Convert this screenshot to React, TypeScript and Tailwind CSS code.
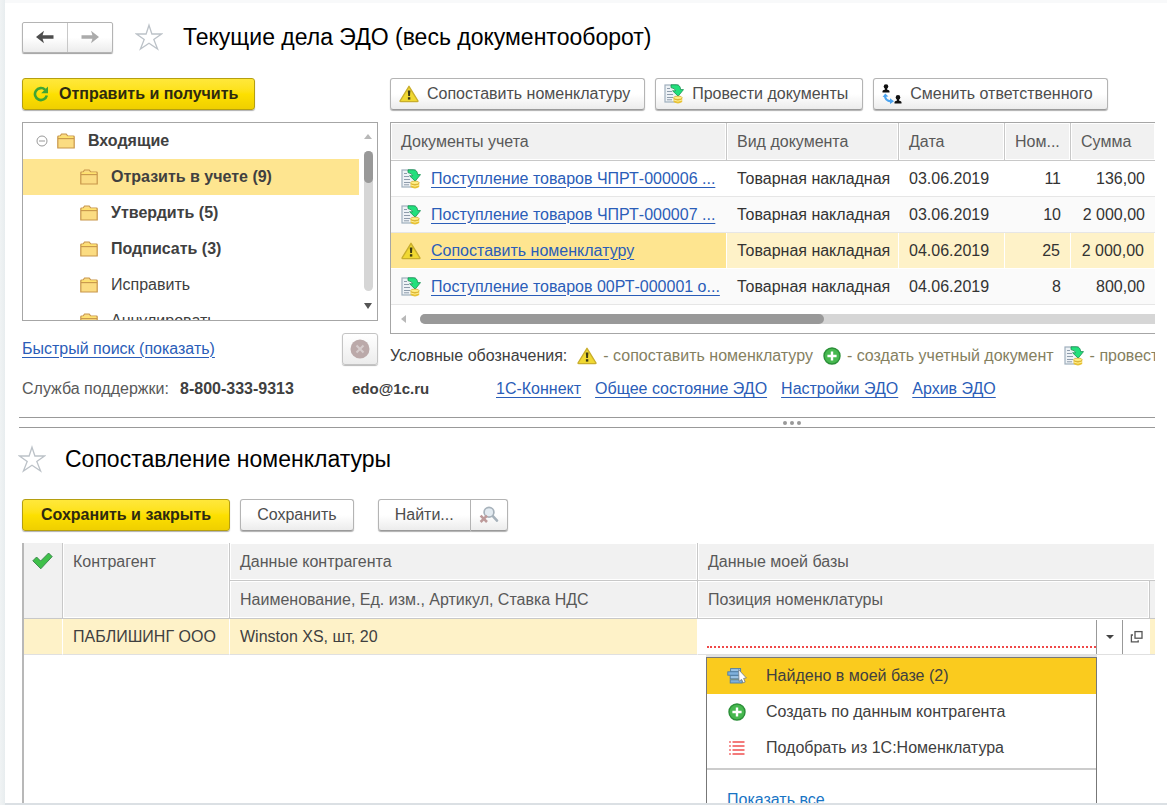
import { useState } from "react";

type IconProps = { className?: string };

const StarIcon = ({ className }: IconProps) => (
  <svg className={className} width="28" height="28" viewBox="0 0 28 28" fill="none">
    <path
      d="M14 2.2 L16.9 11 L26.5 11 L18.8 16.4 L22.6 26 L14 20.2 L5.4 26 L9.2 16.4 L1.5 11 L11.1 11 Z"
      stroke="#bcc2c8"
      strokeWidth="1.3"
    />
  </svg>
);

const ArrowIcon = ({ className }: IconProps) => (
  <svg className={className} width="18" height="14" viewBox="0 0 18 14" fill="currentColor">
    <path d="M0 7 L8 0.8 L6.6 5.2 H17.5 V8.8 H6.6 L8 13.2 Z" />
  </svg>
);

const RefreshIcon = () => (
  <svg width="16" height="16" viewBox="0 0 16 16" fill="none">
    <path d="M12.2 3.8 A6 6 0 1 0 13.8 9.5" stroke="#3fa535" strokeWidth="2.6" />
    <path d="M15 0.5 V7.2 H8.2 Z" fill="#3fa535" />
  </svg>
);

const WarningIcon = () => (
  <svg className="shrink-0" width="20" height="18" viewBox="0 0 20 18">
    <path
      d="M10 1.3 L19 16 Q19 16.6 18.2 16.6 H1.8 Q1 16.6 1 16 Z"
      fill="#f0d832"
      stroke="#c9ae2c"
      strokeWidth="1.4"
      strokeLinejoin="round"
    />
    <path d="M8.8 5.6 H11.4 L11 11 H9.2 Z" fill="#3d3a12" />
    <rect x="8.9" y="12.2" width="2.4" height="2.4" fill="#3d3a12" />
  </svg>
);

const PostIcon = () => (
  <svg className="shrink-0" width="20" height="20" viewBox="0 0 20 20">
    <rect x="1" y="1" width="13" height="17" fill="#eef2f6" stroke="#9fafbd" strokeWidth="1.2" />
    <path d="M3 4.5 H6 M3 7.5 H8 M3 10.5 H9 M3 13.5 H9 M3 15.8 H8" stroke="#8e9cab" />
    <path
      d="M7 0.8 H12.5 Q16.4 1 16.6 5.6 H19.5 L14.2 12.2 L8.6 6.8 H11.6 Q11.4 4.4 7 3.6 Z"
      fill="#22e07c"
      stroke="#1b8f50"
      strokeWidth="0.8"
    />
    <path d="M9.6 13.6 V18 Q14 20.8 18.2 18 V13.6 Z" fill="#e8c234" />
    <ellipse cx="13.9" cy="13.8" rx="4.3" ry="1.7" fill="#ffef86" stroke="#c99a1e" strokeWidth="0.6" />
    <path d="M9.8 16 Q14 18.4 18 16" stroke="#fff3a0" strokeWidth="0.9" fill="none" />
  </svg>
);

const PersonsIcon = () => (
  <svg className="shrink-0" width="20" height="20" viewBox="0 0 20 20">
    <circle cx="4" cy="2.6" r="2.3" fill="#111" />
    <path d="M0.5 8.6 V7 Q0.6 5.9 3 5.4 V4 H5 V5.4 Q7.4 5.9 7.5 7 V8.6 Z" fill="#111" />
    <circle cx="16" cy="13.4" r="2.3" fill="#111" />
    <path d="M12.5 19.6 V18 Q12.6 16.9 15 16.4 V15 H17 V16.4 Q19.4 16.9 19.5 18 V19.6 Z" fill="#111" />
    <path d="M3 11.5 Q3 17 9 17.3" stroke="#4aa3f0" strokeWidth="2.2" fill="none" />
    <path d="M0.6 13 L3.2 9.4 L6.4 12.6 Z M8 14.2 L12 17.3 L8 20 Z" fill="#4aa3f0" />
  </svg>
);

const FolderIcon = () => (
  <svg className="shrink-0" width="18" height="16" viewBox="0 0 18 16">
    <path
      d="M0.8 15 V3.8 Q0.8 3 1.6 3 H3 L4.6 1 H9.2 L10.8 3 H16.4 Q17.2 3 17.2 3.8 V15 Z"
      fill="#fbdc82"
      stroke="#c8964a"
      strokeWidth="1.2"
    />
    <path d="M1 5.6 H17" stroke="#c8964a" strokeWidth="1.1" />
    <path d="M2 4.2 H16" stroke="#ffe36b" strokeWidth="1.4" />
  </svg>
);

const PlusIcon = () => (
  <svg className="shrink-0" width="18" height="18" viewBox="0 0 18 18">
    <circle cx="9" cy="9" r="8" fill="#46b84f" stroke="#2b8f38" strokeWidth="1.4" />
    <path d="M9 4.4 V13.6 M4.4 9 H13.6" stroke="#fff" strokeWidth="2.4" />
  </svg>
);

const CheckIcon = () => (
  <svg width="21" height="18" viewBox="0 0 21 18">
    <path
      d="M0.8 8.8 L4.6 5 L8.6 9 L16.6 1 L20.2 4.6 L8.8 16.8 Z"
      fill="#3fc04a"
      stroke="#37804a"
      strokeWidth="0.9"
      strokeLinejoin="round"
    />
  </svg>
);

const SearchOffIcon = () => (
  <svg width="20" height="18" viewBox="0 0 20 18" fill="none">
    <path d="M13.4 9.6 L18 14.6" stroke="#a7b2bb" strokeWidth="2.6" strokeLinecap="round" />
    <circle cx="10" cy="6.2" r="4.9" fill="#e3ebf1" stroke="#a7b2bb" strokeWidth="1.7" />
    <path d="M1.6 9.6 L8 16 M8 9.6 L1.6 16" stroke="#bd9a9a" strokeWidth="2.6" />
  </svg>
);

const FoundIcon = () => (
  <svg width="20" height="18" viewBox="0 0 20 18">
    <rect x="3.6" y="1.6" width="10" height="3.2" fill="#9cc3e4" stroke="#4d7ca8" strokeWidth="0.9" />
    <rect x="0.8" y="4.8" width="12.8" height="3.4" fill="#7fb0dc" stroke="#4d7ca8" strokeWidth="0.9" />
    <rect x="3.2" y="8.6" width="10.4" height="3.2" fill="#9cc3e4" stroke="#4d7ca8" strokeWidth="0.9" />
    <rect x="3.2" y="12.8" width="12" height="3.2" fill="#7fb0dc" stroke="#4d7ca8" strokeWidth="0.9" />
    <path
      d="M11.6 2.6 L19.4 11 L16.6 11.4 L18.2 15 L16.2 15.8 L14.6 12.4 L12 14.4 Z"
      fill="#fff"
      stroke="#6c7a87"
      strokeWidth="0.8"
    />
  </svg>
);

const ListIcon = () => (
  <svg width="16" height="14" viewBox="0 0 16 14">
    <path d="M3.5 1 H15.5 M3.5 5 H15.5 M3.5 9 H15.5 M3.5 13 H15.5" stroke="#f05050" strokeWidth="1.5" />
    <path d="M0.2 1 H1.8 M0.2 5 H1.8 M0.2 9 H1.8 M0.2 13 H1.8" stroke="#f05050" strokeWidth="1.5" />
  </svg>
);

const OpenIcon = () => (
  <svg width="14" height="14" viewBox="0 0 14 14" fill="none" stroke="#555" strokeWidth="1.3">
    <rect x="5" y="1.6" width="7" height="6.6" />
    <path d="M3 5 H1.4 V11.8 H8.2 V10.2" />
  </svg>
);

const folders = [
  { name: "Отразить в учете (9)", bold: true },
  { name: "Утвердить (5)", bold: true },
  { name: "Подписать (3)", bold: true },
  { name: "Исправить", bold: false },
  { name: "Аннулировать", bold: false },
];

const documents = [
  { title: "Поступление товаров ЧПРТ-000006 ...", date: "03.06.2019", number: "11", sum: "136,00", ready: true },
  { title: "Поступление товаров ЧПРТ-000007 ...", date: "03.06.2019", number: "10", sum: "2 000,00", ready: true },
  { title: "Сопоставить номенклатуру", date: "04.06.2019", number: "25", sum: "2 000,00", ready: false },
  { title: "Поступление товаров 00РТ-000001 о...", date: "04.06.2019", number: "8", sum: "800,00", ready: true },
];

const supportLinks = ["1С-Коннект", "Общее состояние ЭДО", "Настройки ЭДО", "Архив ЭДО"];

const menuItems = [
  { name: "Найдено в моей базе (2)", icon: <FoundIcon /> },
  { name: "Создать по данным контрагента", icon: <PlusIcon /> },
  { name: "Подобрать из 1С:Номенклатура", icon: <ListIcon /> },
];

const grayButton =
  "flex h-8 items-center whitespace-nowrap rounded-[3px] border border-[#b4b4b4] border-b-[#9a9a9a] bg-linear-to-b from-white from-50% to-[#ececec] shadow-[0_1px_1px_#b0b0b0]";
const yellowButton =
  "flex h-8 items-center whitespace-nowrap rounded-[3px] border border-[#b59f10] bg-linear-to-b from-[#ffe83a] via-[#fde000] to-[#efcf00] font-bold text-[#2e2a10] shadow-[0_1px_1px_#b0b0b0]";
const link = "text-[#2a5db8] underline decoration-1 underline-offset-3";
const headCell = "border-r border-b border-[#c8c8c8] px-[10px] text-left font-normal text-[#595959] shadow-[inset_0_0_0_1px_#fff]";

const DocumentsPanel = () => {
  const [folder, setFolder] = useState(0);
  const [selected, setSelected] = useState(2);

  return (
    <section>
      <div className="flex items-center pt-[18px]">
        <div className="flex h-[31px] w-[91px] rounded-[2px] border border-[#b4b4b4] bg-linear-to-b from-white from-50% to-[#ececec] shadow-[0_1px_1px_#a0a0a0]">
          <button aria-label="Назад" className="flex flex-1 items-center justify-center border-r border-[#c8c8c8] text-[#4d4d4d]">
            <ArrowIcon />
          </button>
          <button aria-label="Вперед" className="flex flex-1 items-center justify-center text-[#ababab]">
            <ArrowIcon className="rotate-180" />
          </button>
        </div>
        <StarIcon className="ml-[22px]" />
        <h1 className="ml-5 text-[23px] leading-8 whitespace-nowrap text-black">
          Текущие дела ЭДО (весь документооборот)
        </h1>
      </div>

      <div className="mt-[25px] flex gap-3">
        <div className="w-[356px] shrink-0">
          <button className={`${yellowButton} gap-[10px] pr-4 pl-[10px]`}>
            <RefreshIcon />
            Отправить и получить
          </button>
          <div className="mt-3 flex h-[199px] border border-[#a6a6a6]">
            <ul className="flex-1 overflow-hidden text-[#404040]">
              <li className="flex h-9 items-center pl-[13px] font-bold">
                <svg width="12" height="12" viewBox="0 0 12 12" fill="none" stroke="#999">
                  <circle cx="6" cy="6" r="5" />
                  <path d="M3 6 H9" />
                </svg>
                <span className="ml-[9px] flex items-center gap-[13px]">
                  <FolderIcon />
                  Входящие
                </span>
              </li>
              {folders.map((item, i) => (
                <li key={item.name}>
                  <button
                    onClick={() => setFolder(i)}
                    className={`flex h-9 w-full items-center gap-[13px] pl-[57px] ${item.bold ? "font-bold" : ""} ${
                      folder === i ? "bg-[#fee590]" : ""
                    }`}
                  >
                    <FolderIcon />
                    {item.name}
                  </button>
                </li>
              ))}
            </ul>
            <div className="flex w-[18px] flex-col items-center py-[11px]">
              <span className="border-x-4 border-b-[5px] border-x-transparent border-b-[#b8b8b8]" />
              <div className="mt-3 mb-3 w-[9px] flex-1 rounded-full bg-[#d6d6d6]">
                <div className="h-8 rounded-full bg-[#999]" />
              </div>
              <span className="border-x-4 border-t-[6px] border-x-transparent border-t-[#555]" />
            </div>
          </div>
          <div className="mt-[11px] flex h-[33px] items-center justify-between">
            <a href="#" className={link}>
              Быстрый поиск (показать)
            </a>
            <button
              aria-label="Очистить поиск"
              className="flex h-8 w-9 items-center justify-center rounded-[3px] border border-[#c4c4c4] bg-linear-to-b from-white to-[#ececec] shadow-[0_1px_1px_#b8b8b8]"
            >
              <svg width="20" height="20" viewBox="0 0 20 20">
                <circle cx="10" cy="10" r="9.5" fill="#bba9a9" />
                <path d="M6.5 6.5 L13.5 13.5 M13.5 6.5 L6.5 13.5" stroke="#d6cccc" strokeWidth="2" />
              </svg>
            </button>
          </div>
        </div>

        <div className="min-w-0 flex-1">
          <div className="flex gap-[10px] text-[#4d4d4d]">
            <button className={`${grayButton} gap-2 pr-[14px] pl-2`}>
              <WarningIcon />
              Сопоставить номенклатуру
            </button>
            <button className={`${grayButton} gap-2 pr-[14px] pl-2`}>
              <PostIcon />
              Провести документы
            </button>
            <button className={`${grayButton} gap-2 pr-[14px] pl-2`}>
              <PersonsIcon />
              Сменить ответственного
            </button>
          </div>

          <div className="mt-3 border border-r-0 border-[#a6a6a6]">
            <table className="w-full table-fixed border-separate border-spacing-0 whitespace-nowrap">
              <colgroup>
                <col />
                <col className="w-[172px]" />
                <col className="w-[106px]" />
                <col className="w-[66px]" />
                <col className="w-[84px]" />
              </colgroup>
              <thead>
                <tr className="h-[38px] bg-[#f1f1f1]">
                  <th className={headCell}>Документы учета</th>
                  <th className={headCell}>Вид документа</th>
                  <th className={headCell}>Дата</th>
                  <th className={headCell}>Ном...</th>
                  <th className={`${headCell} border-r-0`}>Сумма</th>
                </tr>
              </thead>
              <tbody className="text-[#333]">
                {documents.map((doc, i) => {
                  const active = selected === i;
                  const cell = `border-b px-[10px] ${
                    active ? "border-r border-white bg-[#fef2c8]" : "border-[#e6e6e6]"
                  }`;
                  return (
                    <tr key={doc.title} onClick={() => setSelected(i)} className={`h-9 ${i % 2 ? "bg-[#fafafa]" : ""}`}>
                      <td className={`border-b pl-[10px] ${active ? "border-r border-white bg-[#fee590]" : "border-[#e6e6e6]"}`}>
                        <div className="flex items-center gap-[10px]">
                          {doc.ready ? <PostIcon /> : <WarningIcon />}
                          <a href="#" className={link}>
                            {doc.title}
                          </a>
                        </div>
                      </td>
                      <td className={cell}>Товарная накладная</td>
                      <td className={cell}>{doc.date}</td>
                      <td className={`${cell} text-right`}>{doc.number}</td>
                      <td className={`${cell} text-right`}>{doc.sum}</td>
                    </tr>
                  );
                })}
              </tbody>
            </table>
            <div className="flex h-7 items-center pl-[10px]">
              <span className="mr-[14px] border-y-4 border-r-[5px] border-y-transparent border-r-[#b8b8b8]" />
              <div className="h-[10px] flex-1 rounded-l-full bg-[#d6d6d6]">
                <div className="h-full w-[55%] rounded-full bg-[#999]" />
              </div>
            </div>
          </div>

          <div className="mt-[10px] flex h-6 items-center overflow-hidden whitespace-nowrap text-[#85805f]">
            <span className="mr-[10px] text-[#404040]">Условные обозначения:</span>
            <WarningIcon />
            <span className="mr-[10px] ml-[6px]">- сопоставить номенклатуру</span>
            <PlusIcon />
            <span className="mr-[10px] ml-[6px]">- создать учетный документ</span>
            <PostIcon />
            <span className="ml-[6px]">- провести</span>
          </div>
        </div>
      </div>

      <div className="mt-[9px] flex h-6 items-center whitespace-nowrap text-[#595959]">
        <span className="w-[158px]">Служба поддержки:</span>
        <b className="w-[172px] text-[#404040]">8-800-333-9313</b>
        <b className="w-36 text-[15px] text-[#404040]">edo@1c.ru</b>
        <div className="flex gap-[14px]">
          {supportLinks.map((name) => (
            <a key={name} href="#" className={link}>
              {name}
            </a>
          ))}
        </div>
      </div>
    </section>
  );
};

const MatchingPanel = () => {
  const [value, setValue] = useState("");
  const [active, setActive] = useState(0);

  return (
    <section className="flex flex-1 flex-col">
      <div className="-ml-1 flex items-center pt-[15px]">
        <StarIcon />
        <h2 className="ml-[19px] text-[23px] leading-8 whitespace-nowrap text-black">Сопоставление номенклатуры</h2>
      </div>
      <div className="mt-6 flex text-[#4d4d4d]">
        <button className={`${yellowButton} px-[18px]`}>Сохранить и закрыть</button>
        <button className={`${grayButton} ml-[10px] px-4`}>Сохранить</button>
        <button className={`${grayButton} ml-6 rounded-r-none px-4`}>Найти...</button>
        <button aria-label="Отменить поиск" className={`${grayButton} rounded-l-none border-l-0 px-2`}>
          <SearchOffIcon />
        </button>
      </div>

      <div className="mt-3 flex-1 border-l-2 border-[#b8b8b8]">
        <table className="w-full table-fixed border-separate border-spacing-0 whitespace-nowrap">
          <colgroup>
            <col className="w-[39px]" />
            <col className="w-[167px]" />
            <col className="w-[468px]" />
            <col />
            <col className="w-[5px]" />
          </colgroup>
          <thead className="bg-[#f1f1f1]">
            <tr className="h-[38px]">
              <th rowSpan={2} aria-label="Отметка" className="border-r border-b border-[#c8c8c8] pt-[9px] pl-2 align-top">
                <CheckIcon />
              </th>
              <th rowSpan={2} className={`${headCell} pt-[9px] align-top`}>
                Контрагент
              </th>
              <th className={headCell}>Данные контрагента</th>
              <th colSpan={2} className={`${headCell} border-r-0`}>
                Данные моей базы
              </th>
            </tr>
            <tr className="h-[38px]">
              <th className={headCell}>Наименование, Ед. изм., Артикул, Ставка НДС</th>
              <th className={headCell}>Позиция номенклатуры</th>
              <th aria-hidden="true" className="border-b border-[#c8c8c8]" />
            </tr>
          </thead>
          <tbody className="text-[#404040]">
            <tr className="h-9">
              <td className="border-r border-b border-white border-b-[#e0e0e0] bg-[#fef2c8]" />
              <td className="border-r border-b border-white border-b-[#e0e0e0] bg-[#fef2c8] px-[10px]">ПАБЛИШИНГ ООО</td>
              <td className="border-r border-b border-white border-b-[#e0e0e0] bg-[#fef2c8] px-[10px]">Winston XS, шт, 20</td>
              <td className="relative border-b border-[#e0e0e0] pl-[9px]">
                <div className="flex h-[34px]">
                  <input
                    aria-label="Позиция номенклатуры"
                    value={value}
                    onChange={(e) => setValue(e.target.value)}
                    className="mb-[6px] min-w-0 flex-1 border-b-2 border-dotted border-[#f04848] outline-none"
                  />
                  <button aria-label="Выбрать" className="flex w-[27px] items-center justify-center border-x border-[#999]">
                    <span className="border-x-4 border-t-4 border-x-transparent border-t-[#444]" />
                  </button>
                  <button aria-label="Открыть" className="flex w-[27px] items-center justify-center">
                    <OpenIcon />
                  </button>
                </div>
                <div className="absolute top-[38px] right-[53px] left-2 h-48 border border-[#777] bg-white shadow-[0_-2px_0_#e2e2e2]">
                  {menuItems.map((item, i) => (
                    <button
                      key={item.name}
                      onMouseEnter={() => setActive(i)}
                      className={`flex h-9 w-full items-center pl-5 ${active === i ? "bg-[#facb1e]" : ""}`}
                    >
                      <span className="mr-[19px] flex w-5 justify-center">{item.icon}</span>
                      {item.name}
                    </button>
                  ))}
                  <div className="mt-[2px] border-t-2 border-[#ccc] pt-5 pl-5">
                    <a href="#" className="text-[#1874c4]">
                      Показать все
                    </a>
                  </div>
                </div>
              </td>
              <td className="border-b border-[#e0e0e0] bg-[#fef2c8]" />
            </tr>
          </tbody>
        </table>
      </div>
    </section>
  );
};

const App = () => {
  return (
    <div className="h-screen bg-linear-to-r from-[#f0f3f4] to-[#e8edef] to-[5px] pl-[5px] font-['Liberation_Sans',Arial,sans-serif] text-[16px] leading-5">
      <main className="flex h-full flex-col overflow-hidden border-t-[3px] border-b-2 border-t-[#f8f9fa] border-b-[#dbe0e4] bg-white pr-3 pl-[17px]">
        <DocumentsPanel />
        <div className="mt-4 -ml-[3px] flex h-[11px] shrink-0 items-center justify-center gap-[3px] border-y border-[#999] pl-[410px]">
          <span className="size-1 rounded-full bg-[#999]" />
          <span className="size-1 rounded-full bg-[#999]" />
          <span className="size-1 rounded-full bg-[#999]" />
        </div>
        <MatchingPanel />
      </main>
    </div>
  );
};

export default App;
